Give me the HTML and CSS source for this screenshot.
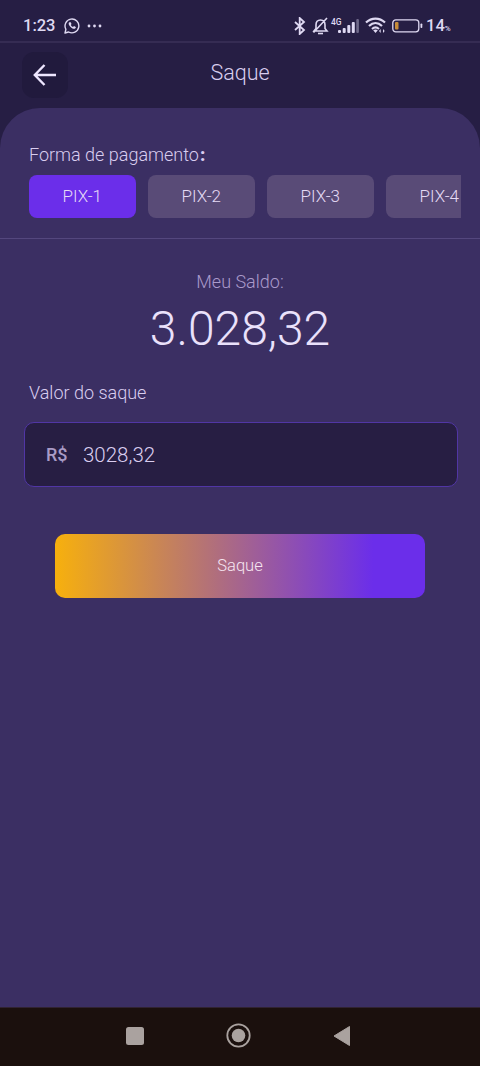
FILE: index.html
```html
<!DOCTYPE html>
<html lang="pt-BR">
<head>
<meta charset="utf-8">
<title>Saque</title>
<link rel="stylesheet" href="styles.css">
</head>
<body>
<div class="status">
  <span class="clock">1:23</span>
  <svg class="whatsapp" width="16" height="16" viewBox="0 0 16 16"><path d="M1 15l.9-3.7A6.9 6.9 0 1 1 4.6 14z" fill="none" stroke="currentColor" stroke-width="1.4" stroke-linejoin="round"/><path d="M5.2 4.2c-1 1-.6 2.600.9 4.300s3.300 2.700 4.700 2.200c.9-.4 1.100-1 1-1.700L10 8l-1 1C7.900 8.600 7.200 7.900 6.800 7l.7-.9-.8-1.900z" fill="currentColor"/></svg>
  <svg class="dots" width="16" height="4" viewBox="0 0 16 4" fill="currentColor"><circle cx="2" cy="2" r="1.400"/><circle cx="7.500" cy="2" r="1.400"/><circle cx="13" cy="2" r="1.400"/></svg>
  <svg class="bluetooth" width="12" height="18" viewBox="0 0 12 18"><path d="M1 5l9 8-4.300 4V1L10 5l-9 8" fill="none" stroke="currentColor" stroke-width="1.800"/></svg>
  <svg class="bell" width="17" height="18" viewBox="0 0 17 18" fill="none" stroke="currentColor" stroke-width="1.600"><path d="M2 14h13l-2-2.500V8c0-3-1.500-5-4.500-5S4 5 4 8v3.500zM1.500 15.500L15 1"/><path d="M6 16.500h5"/></svg>
  <span class="net">4G</span>
  <svg class="signal" width="22" height="14" viewBox="0 0 22 14" fill="currentColor"><rect x="0" y="11" width="3" height="3" rx="1"/><rect x="4.700" y="9" width="3" height="5" rx="1"/><rect x="9.300" y="6" width="3" height="8" rx="1"/><rect x="13.800" y="3" width="3" height="11" rx="1"/><rect x="18.300" y="0" width="2.600" height="14" rx="1" opacity=".4"/></svg>
  <svg class="wifi" width="22" height="17" viewBox="0 0 22 17"><path d="M1 5.500c5.500-5.300 13.500-5.300 19 0M4 9c4-3.800 9-3.800 13 0M7 12c2.300-2 4.700-2 7 0" fill="none" stroke="currentColor" stroke-width="2.200"/><path d="M8.200 13.200q2.300-1.500 4.600 0L10.500 16zM14 14l1.700-2v4zM19.700 14L18 12v4z" fill="currentColor"/></svg>
  <svg class="battery" width="31" height="14" viewBox="0 0 31 14"><rect x=".8" y=".8" width="26" height="12" rx="3" fill="none" stroke="currentColor" stroke-width="1.300"/><rect x="3" y="3" width="3.500" height="7.600" rx="1" fill="#c68b39"/><rect x="28.500" y="4.500" width="1.800" height="4.500" rx=".8" fill="currentColor"/></svg>
  <span class="percent">14<small>%</small></span>
</div>
<header class="header">
  <div class="back"><svg width="24" height="22" viewBox="0 0 24 22"><path d="M11.500 1L1.800 11l9.700 10M2 11h21" fill="none" stroke="currentColor" stroke-width="2.400"/></svg></div>
  <h1 class="title">Saque</h1>
</header>
<main class="panel">
  <section class="methods">
    <h2 class="label">Forma de pagamento<b>:</b></h2>
    <div class="tabs">
      <div class="tab active">PIX-1</div>
      <div class="tab">PIX-2</div>
      <div class="tab">PIX-3</div>
      <div class="tab">PIX-4</div>
    </div>
  </section>
  <div class="balance-label">Meu Saldo:</div>
  <div class="balance">3.028,32</div>
  <div class="label amount-label">Valor do saque</div>
  <div class="field"><span class="currency">R$</span><span class="amount">3028,32</span></div>
  <div class="submit">Saque</div>
</main>
<nav class="nav">
  <svg width="18" height="18" viewBox="0 0 18 18"><rect width="18" height="18" rx="2.500" fill="currentColor"/></svg>
  <svg width="25" height="25" viewBox="0 0 25 25"><circle cx="12.500" cy="12.500" r="11.200" fill="none" stroke="currentColor" stroke-width="1.800"/><circle cx="12.500" cy="12.500" r="6.800" fill="currentColor"/></svg>
  <svg width="18" height="20" viewBox="0 0 18 20"><path d="M16.500 .5v19L1 10z" fill="currentColor" stroke="currentColor" stroke-linejoin="round"/></svg>
</nav>
</body>
</html>
```
FILE: styles.css
```css
* { box-sizing: border-box; }
body {
  margin: 0;
  width: 480px;
  height: 1066px;
  display: flex;
  flex-direction: column;
  overflow: hidden;
  background: #261e44;
  color: #d9cdef;
  font-family: Roboto, "Liberation Sans", sans-serif;
  font-weight: 300;
}
svg { display: block; flex: none; }
.status {
  height: 43px;
  padding: 10px 0 0 23px;
  border-bottom: 2px solid #352c53;
  display: flex;
  align-items: center;
  color: #dfd9f2;
  flex: none;
}
.clock { width: 41px; font-size: 16.5px; font-weight: 500; line-height: 20px; }
.dots { margin-left: 7px; }
.bluetooth { margin-left: 191px; }
.bell { margin-left: 6px; }
.net { width: 12px; margin: 0 -4px 8px 2px; font-size: 8.500px; font-weight: 500; line-height: 10px; }
.signal { margin-left: -1px; }
.wifi { margin-left: 5px; }
.battery { margin-left: 5px; }
.percent { display: flex; align-items: baseline; margin-left: 3px; font-size: 16.5px; font-weight: 500; line-height: 20px; }
.percent small { font-size: 8px; line-height: 10px; }
.header {
  height: 65px;
  padding: 9px 22px 0;
  display: grid;
  grid-template-columns: 46px 1fr 46px;
  align-items: start;
  flex: none;
}
.back {
  height: 46px;
  border-radius: 12px;
  background: #211a3d;
  color: #eee6ff;
  display: grid;
  place-items: center;
}
.title { margin: 8px 0 0; font-size: 21.5px; line-height: 26px; font-weight: 300; text-align: center; }
.panel {
  flex: 1;
  border-radius: 40px 40px 0 0;
  background: #3b2f63;
  display: flex;
  flex-direction: column;
}
.methods {
  height: 131px;
  padding: 36px 19px 0 29px;
  border-bottom: 1px solid #54477e;
}
.label { margin: 0; font-size: 18px; line-height: 22px; font-weight: 300; }
.label b { font-weight: 900; margin-left: 1px; }
.tabs { margin-top: 9px; display: flex; gap: 12.5px; overflow: hidden; }
.tab {
  flex: none;
  width: 106.5px;
  height: 43px;
  border-radius: 8px;
  background: #594b77;
  font-size: 17px;
  line-height: 42px;
  text-align: center;
  color: #e5daf5;
}
.active { background: #6b2eea; }
.balance-label { margin-top: 32px; font-size: 18px; line-height: 22px; text-align: center; color: #aa9acb; }
.balance { margin-top: 7px; font-size: 48px; line-height: 58px; text-align: center; color: #eae1fb; }
.amount-label { margin: 24px 0 0 29px; }
.field {
  height: 65px;
  margin: 18px 22px 0 24px;
  padding-left: 21px;
  border: 1px solid #5136a5;
  border-radius: 10px;
  background: #271e43;
  display: flex;
  align-items: center;
}
.currency { width: 37px; font-size: 18px; font-weight: 500; color: #a99bc6; }
.amount { font-size: 20.5px; }
.submit {
  height: 64px;
  margin: 47px 55px 0;
  border-radius: 10px;
  background: linear-gradient(90deg, #f7b00d, #6b2eea 86%);
  color: #f5e4f1;
  font-size: 16.5px;
  line-height: 63px;
  text-align: center;
}
.nav {
  height: 59px;
  padding: 0 129px 3px 126px;
  border-top: 1px solid #302331;
  background: #1b100d;
  color: #aaa29f;
  display: flex;
  align-items: center;
  justify-content: space-between;
  flex: none;
}
```
